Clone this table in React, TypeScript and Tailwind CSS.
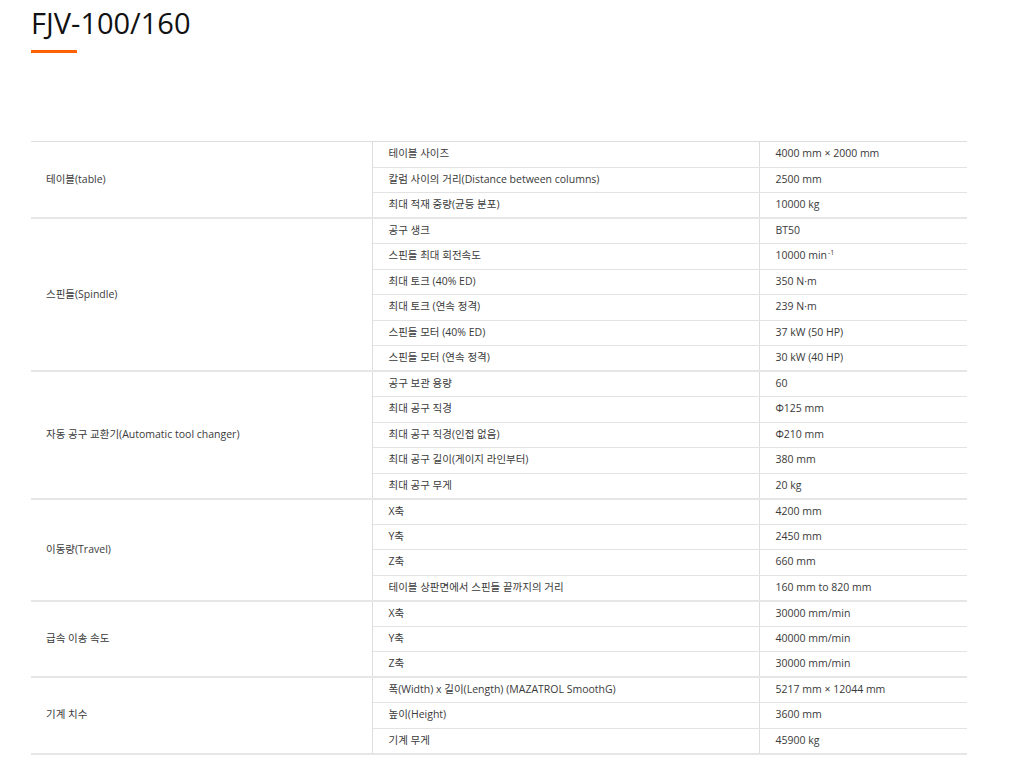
import React from "react";

type Row = { label: React.ReactNode; value: React.ReactNode };
type Group = { name: string; rows: Row[] };

const groups: Group[] = [
  {
    name: "테이블(table)",
    rows: [
      { label: "테이블 사이즈", value: "4000 mm × 2000 mm" },
      { label: "칼럼 사이의 거리(Distance between columns)", value: "2500 mm" },
      { label: "최대 적재 중량(균등 분포)", value: "10000 kg" },
    ],
  },
  {
    name: "스핀들(Spindle)",
    rows: [
      { label: "공구 생크", value: "BT50" },
      {
        label: "스핀들 최대 회전속도",
        value: (
          <>
            10000 min<span className="text-[7px] relative -top-[4px] ml-[1px]">-1</span>
          </>
        ),
      },
      { label: "최대 토크 (40% ED)", value: "350 N·m" },
      { label: "최대 토크 (연속 정격)", value: "239 N·m" },
      { label: "스핀들 모터 (40% ED)", value: "37 kW (50 HP)" },
      { label: "스핀들 모터 (연속 정격)", value: "30 kW (40 HP)" },
    ],
  },
  {
    name: "자동 공구 교환기(Automatic tool changer)",
    rows: [
      { label: "공구 보관 용량", value: "60" },
      { label: "최대 공구 직경", value: "Φ125 mm" },
      { label: "최대 공구 직경(인접 없음)", value: "Φ210 mm" },
      { label: "최대 공구 길이(게이지 라인부터)", value: "380 mm" },
      { label: "최대 공구 무게", value: "20 kg" },
    ],
  },
  {
    name: "이동량(Travel)",
    rows: [
      { label: "X축", value: "4200 mm" },
      { label: "Y축", value: "2450 mm" },
      { label: "Z축", value: "660 mm" },
      { label: "테이블 상판면에서 스핀들 끝까지의 거리", value: "160 mm to 820 mm" },
    ],
  },
  {
    name: "급속 이송 속도",
    rows: [
      { label: "X축", value: "30000 mm/min" },
      { label: "Y축", value: "40000 mm/min" },
      { label: "Z축", value: "30000 mm/min" },
    ],
  },
  {
    name: "기계 치수",
    rows: [
      { label: "폭(Width) x 길이(Length) (MAZATROL SmoothG)", value: "5217 mm × 12044 mm" },
      { label: "높이(Height)", value: "3600 mm" },
      { label: "기계 무게", value: "45900 kg" },
    ],
  },
];

export default function App() {
  return (
    <div
      className="w-[1024px] min-h-[764px] bg-white text-[#333]"
      style={{ fontFamily: '"Open Sans", "Noto Sans CJK KR", sans-serif' }}
    >
      <div className="pl-[31px] pt-[6px]">
        <h1 className="text-[29px] leading-[34px] font-normal text-[#111]">FJV-100/160</h1>
        <div className="mt-[10px] h-[3px] w-[46px] bg-[#ff6000]" />
      </div>
      <div className="pl-[31px] mt-[88px]">
        <table className="w-[936px] border-collapse table-fixed text-[10.5px] text-[#3a3a3a]">
          <colgroup>
            <col className="w-[341px]" />
            <col className="w-[387px]" />
            <col className="w-[208px]" />
          </colgroup>
          <tbody>
            {groups.map((g, gi) =>
              g.rows.map((r, ri) => {
                const last = ri === g.rows.length - 1;
                const first = ri === 0;
                const topB = gi === 0 && first ? "border-t border-t-[#dddddd]" : "";
                const bottomB = last
                  ? "border-b-2 border-b-[#e6e6e6]"
                  : "border-b border-b-[#e3e3e3]";
                return (
                  <tr key={`${gi}-${ri}`}>
                    {first && (
                      <td
                        rowSpan={g.rows.length}
                        className={`pl-[15px] align-middle border-r border-r-[#dddddd] border-b-2 border-b-[#e6e6e6] ${topB}`}
                      >
                        {g.name}
                      </td>
                    )}
                    <td
                      className={`h-[25.5px] pl-[16px] py-0 align-middle border-r border-r-[#dddddd] ${bottomB} ${topB}`}
                    >
                      {r.label}
                    </td>
                    <td className={`h-[25.5px] pl-[16px] py-0 align-middle ${bottomB} ${topB}`}>
                      {r.value}
                    </td>
                  </tr>
                );
              })
            )}
          </tbody>
        </table>
      </div>
    </div>
  );
}
